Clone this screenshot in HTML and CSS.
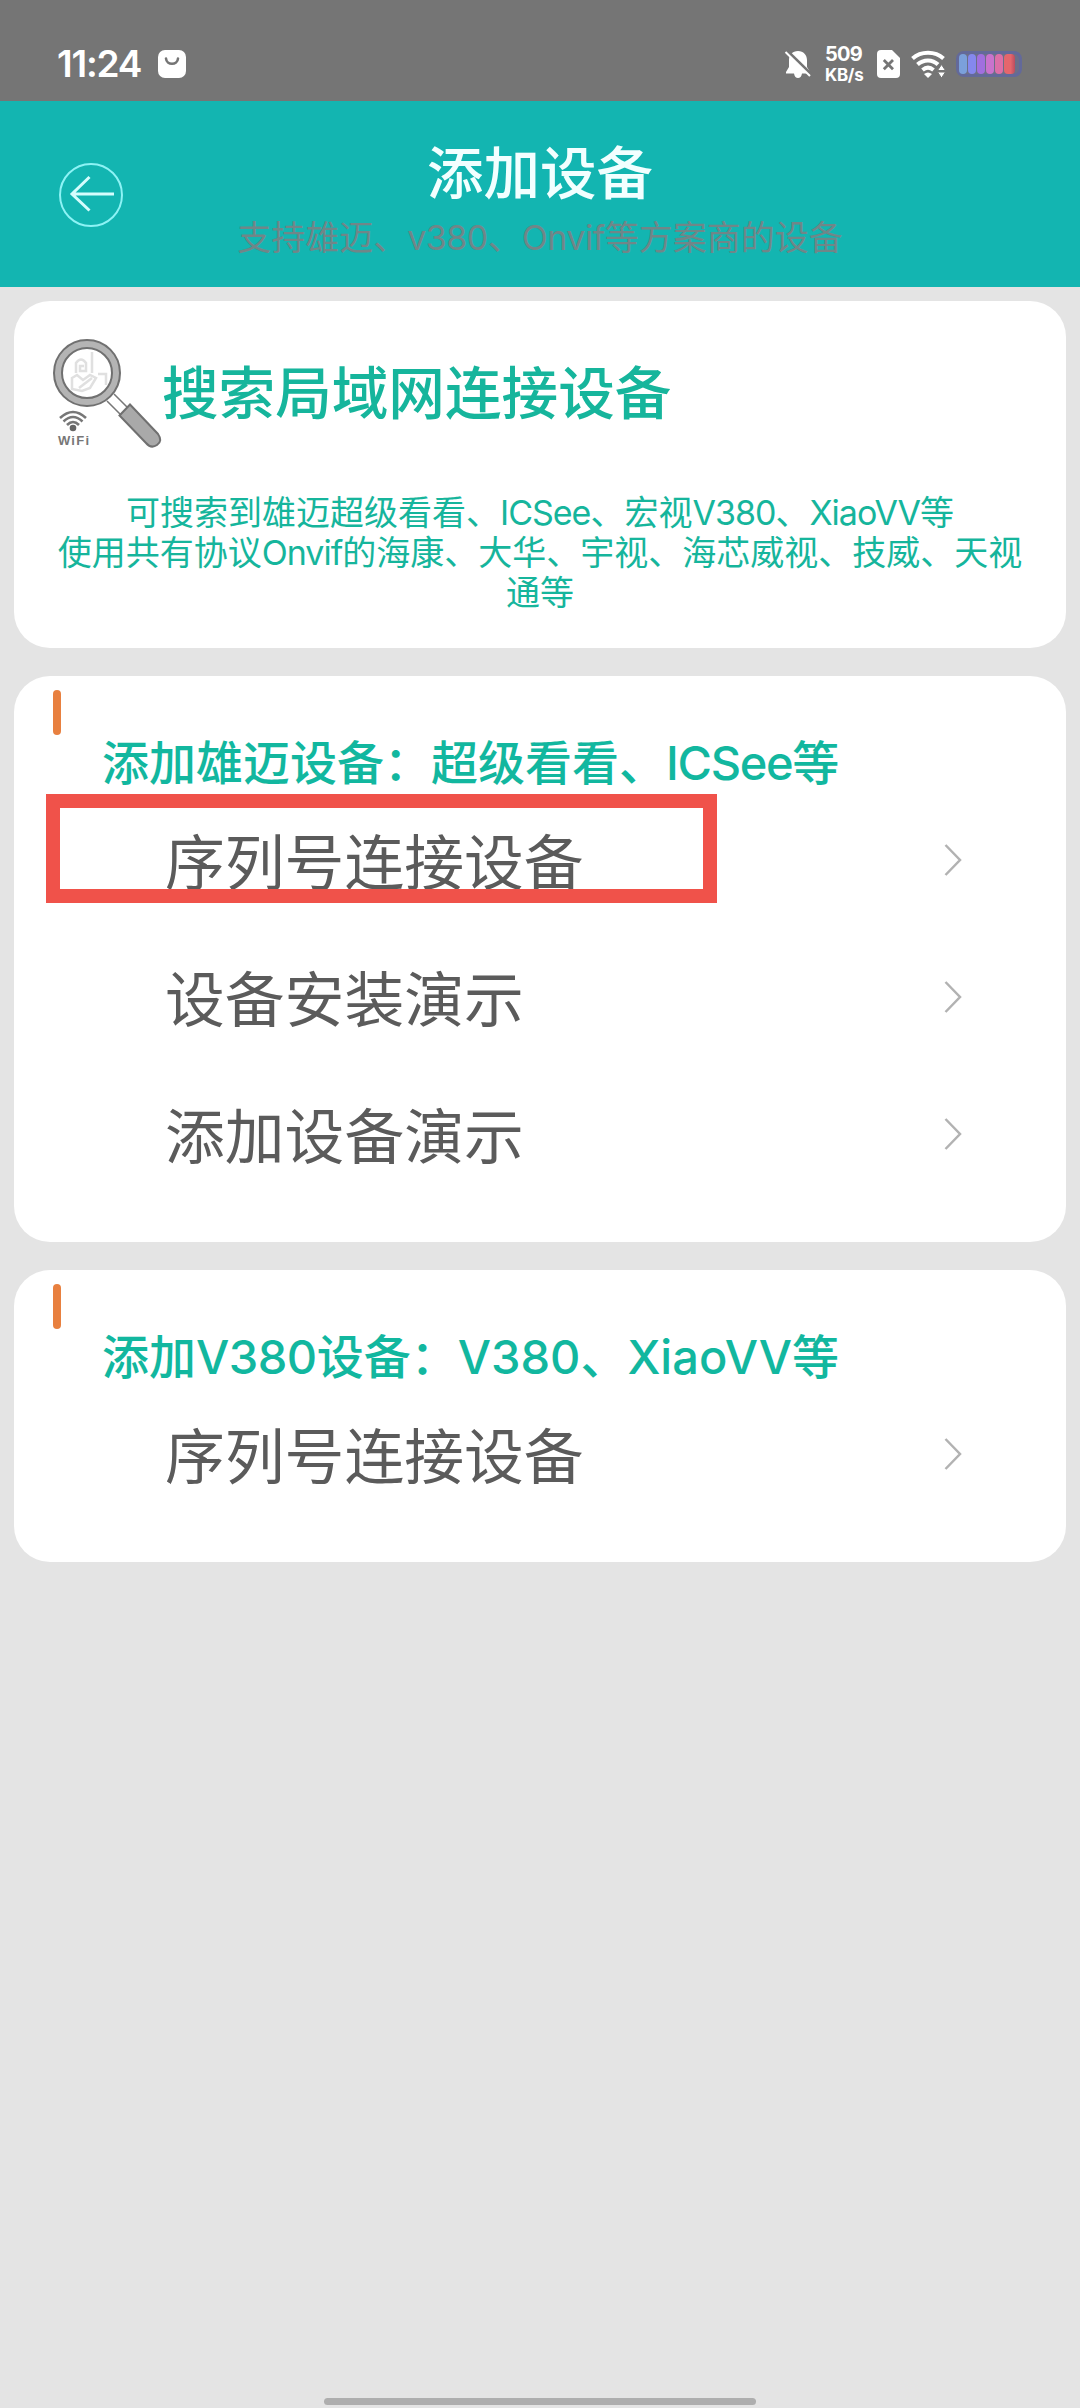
FILE: index.html
```html
<!DOCTYPE html>
<html lang="zh-CN">
<head>
<meta charset="utf-8">
<title>添加设备</title>
<link rel="stylesheet" href="styles.css">
</head>
<body>
<div class="screen">
  <div class="status">
    <span class="time">11:24</span>
    <svg class="bag" viewBox="0 0 28 28"><rect width="28" height="28" rx="7" fill="#fff"/><path d="M8 8.500C8.500 15.500 19.500 15.500 20 8.500" fill="none" stroke="#757575" stroke-width="2.600" stroke-linecap="round"/></svg>
    <div class="tray">
      <svg class="bell" viewBox="0 0 26 28"><path d="M13 1C7.500 1 4 5 4 10V17L1 22V23.500H9C9.500 26.500 11 28 13 28S16.500 26.500 17 23.500H25V22L22 17V10C22 5 18.500 1 13 1Z" fill="#fff"/><path d="M1.500 .5L26 24.500" stroke="#757575" stroke-width="3.500"/><path d="M.5 2L25 26" stroke="#fff" stroke-width="2"/></svg>
      <div class="speed"><span>509</span><span class="unit">KB/s</span></div>
      <svg class="sim" viewBox="0 0 23 28"><path d="M4 0H15L23 8V24Q23 28 19 28H4Q0 28 0 24V4Q0 0 4 0Z" fill="#fff"/><path d="M6.800 10L16 19.200M16 10L6.800 19.200" stroke="#757575" stroke-width="2.800"/></svg>
      <svg class="wifi" viewBox="0 0 34 28"><g fill="none" stroke="#fff" stroke-width="4"><path d="M1.500 8.500C10 .8 24 .8 32.500 8.500"/><path d="M6.500 14.500C12.500 9 21.500 9 27 14.500"/><path d="M11.500 20C15 17 19 17 22.500 20"/></g><path d="M13 24Q17 21 21 24L17 28Z" fill="#fff"/><path d="M30.500 14.500L34.500 20.500H26.500ZM30.500 28L34.500 22H26.500Z" fill="#fff" stroke="#757575" stroke-width="1"/></svg>
      <div class="battery"><i class="c1"></i><i class="c2"></i><i class="c3"></i><i class="c4"></i><i class="c5"></i><i class="c6"></i></div>
    </div>
  </div>
  <header class="header">
    <svg class="back" viewBox="0 0 64 64"><circle cx="32" cy="32" r="31" fill="none" stroke="#8df3f5" stroke-width="2"/><path d="M55 31H13M30.500 14L13 31L30.500 47.500" fill="none" stroke="#d5fdfd" stroke-width="3"/></svg>
    <div class="titles">
      <h1>添加设备</h1>
      <p>支持雄迈、<span class="snug">v380</span>、<span class="snug">Onvif</span>等方案商的设备</p>
    </div>
  </header>
  <main class="cards">
    <section class="card search">
      <div class="search-head">
        <svg class="lens" viewBox="0 0 110 110">
          <path d="M55 62L70 77M62 55L77 70" stroke="#777" stroke-width="1.500"/>
          <path d="M67.500 76.500L78 65.500L106 95Q111 102 105 106Q99 110 94 104Z" fill="#a9a9a9" stroke="#707070" stroke-width="2"/>
          <circle cx="35" cy="34" r="29" fill="#fff" stroke="#707070" stroke-width="10"/>
          <circle cx="35" cy="34" r="29" fill="none" stroke="#b4b4b4" stroke-width="6"/>
          <g fill="none" stroke="#e0e0e0" stroke-width="2.500"><path d="M24 34V24Q29 17 34 24V32H28V27H32M40 13V34M20 39L25 36L31 41L38 36L44 39L38 49L30 52L20 50ZM27 49L40 39M46 35H54V46"/></g>
          <g fill="none" stroke="#777" stroke-width="2.600"><path d="M8 79Q21 67 34 79"/><path d="M11.500 82.500Q21 73.500 30.500 82.500"/><path d="M15 86Q21 80 27 86"/></g>
          <circle cx="21" cy="89" r="3.300" fill="#666"/>
          <text x="6" y="106" class="wifi-label" textLength="31">WiFi</text>
        </svg>
        <h2>搜索局域网连接设备</h2>
      </div>
      <p class="desc">可搜索到雄迈超级看看、<span class="tight">ICSee</span>、宏视<span class="tight">V380</span>、<span class="tight">XiaoVV</span>等<br>使用共有协议<span class="tight">Onvif</span>的海康、大华、宇视、海芯威视、技威、天视<br>通等</p>
    </section>
    <section class="card group">
      <div class="marker"></div>
      <h3>添加雄迈设备：超级看看、<span class="tighter">ICSee</span>等</h3>
      <div class="row marked"><span>序列号连接设备</span><svg class="chev" viewBox="0 0 18 34"><path d="M1.500 2L16 17L1.500 32"/></svg></div>
      <div class="row"><span>设备安装演示</span><svg class="chev" viewBox="0 0 18 34"><path d="M1.500 2L16 17L1.500 32"/></svg></div>
      <div class="row"><span>添加设备演示</span><svg class="chev" viewBox="0 0 18 34"><path d="M1.500 2L16 17L1.500 32"/></svg></div>
    </section>
    <section class="card group">
      <div class="marker"></div>
      <h3>添加<span class="snug">V380</span>设备：V380、XiaoVV等</h3>
      <div class="row"><span>序列号连接设备</span><svg class="chev" viewBox="0 0 18 34"><path d="M1.500 2L16 17L1.500 32"/></svg></div>
    </section>
  </main>
  <div class="home"></div>
</div>
</body>
</html>
```
FILE: styles.css
```css
* { box-sizing: border-box; }
body, h1, h2, h3, p { margin: 0; }
body { background: #e4e4e4; font-family: Inter, "Noto Sans CJK SC", sans-serif; }
.screen { width: 1080px; height: 2408px; display: flex; flex-direction: column; overflow: hidden; }
svg { display: block; flex: none; overflow: visible; }

.status { height: 101px; background: #757575; display: flex; align-items: center; padding: 27px 58px 0 57px; color: #fff; }
.time { font-size: 37px; font-weight: 600; line-height: 40px; width: 101px; white-space: nowrap; letter-spacing: -1.200px; }
.bag { width: 28px; height: 28px; }
.tray { margin-left: auto; display: flex; align-items: center; }
.bell { width: 26px; height: 28px; margin-right: 14px; }
.speed { width: 38px; display: flex; flex-direction: column; font-size: 20px; line-height: 21px; font-weight: 700; margin-right: 14px; letter-spacing: -.8px; }
.unit { font-size: 17px; line-height: 20px; letter-spacing: -.3px; }
.sim { width: 23px; height: 28px; margin-right: 11px; }
.wifi { width: 34px; height: 28px; margin-right: 11px; }
.battery { width: 66px; height: 26px; border-radius: 8px; border: 3px solid #63699a; background: #6c6f88; display: flex; gap: 1px; }
.battery i { width: 8px; height: 20px; border-radius: 4px; }
.c1 { background: #7ba0db; }
.c2 { background: #8588ee; }
.c3 { background: #a16fdf; }
.c4 { background: #c973cd; }
.c5 { background: #dc6fa8; }
.battery .c6 { background: linear-gradient(90deg, #e5666c 60%, #bb4d5f); width: 11px; }

.header { height: 186px; background: #13b5b1; display: grid; grid-template-columns: 124px 1fr 124px; }
.back { width: 64px; height: 64px; margin: 62px 0 0 59px; }
.titles { text-align: center; color: #f2ffff; padding-top: 37px; white-space: nowrap; }
h1 { font-size: 56.500px; font-weight: 500; line-height: 72px; }
.titles p { font-size: 34px; line-height: 50px; padding-top: 3px; color: #708688; }
.snug { letter-spacing: -.5px; }
.tight { letter-spacing: -1px; }
.tighter { letter-spacing: -1.300px; }

.cards { padding: 14px 14px 0; display: flex; flex-direction: column; gap: 28px; }
.card { background: #fff; border-radius: 36px; }
.search { height: 347px; color: #16b59c; }
.search-head { display: flex; align-items: center; padding: 37px 0 0 38px; height: 148px; }
.lens { width: 110px; height: 110px; }
.wifi-label { font: bold 13px "Liberation Sans", sans-serif; fill: #777; }
h2 { font-size: 56.600px; font-weight: 500; line-height: 70px; white-space: nowrap; }
.desc { font-size: 34px; line-height: 40px; text-align: center; padding-top: 44px; white-space: nowrap; }

.group { padding: 14px 0 40px; }
.marker { width: 8px; height: 45px; border-radius: 4px; background: #e8803f; margin-left: 39px; }
h3 { font-size: 47px; line-height: 56px; height: 56px; font-weight: 500; color: #12b79f; padding-left: 88px; white-space: nowrap; }
.row { height: 137px; display: flex; align-items: center; justify-content: space-between; padding: 0 104px 0 151px; font-size: 59.800px; line-height: 80px; color: #5b5b5b; position: relative; }
.row span { padding-top: 6px; }
.chev { width: 18px; height: 34px; fill: none; stroke: #b2b2b2; stroke-width: 2.500; }
/* highlight frame laid over the first entry */
.marked::after { content: ""; box-sizing: border-box; position: absolute; left: 32px; top: 3px; width: 671px; height: 109px; border: 14px solid #f0524a; }

.home { width: 432px; height: 7px; border-radius: 4px; background: #aeaeae; margin: auto auto 3px; }
```
